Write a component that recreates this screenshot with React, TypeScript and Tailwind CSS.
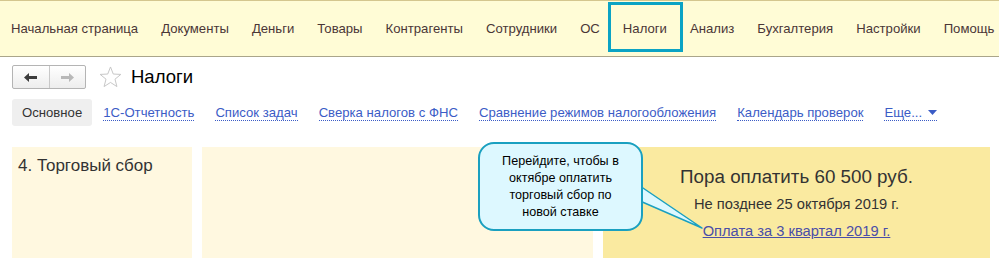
import React from 'react';

const navItems = [
  'Начальная страница',
  'Документы',
  'Деньги',
  'Товары',
  'Контрагенты',
  'Сотрудники',
  'ОС',
  'Налоги',
  'Анализ',
  'Бухгалтерия',
  'Настройки',
  'Помощь',
];

const tabLinks = [
  '1С-Отчетность',
  'Список задач',
  'Сверка налогов с ФНС',
  'Сравнение режимов налогообложения',
  'Календарь проверок',
];

const ArrowLeft = ({ color }: { color: string }) => (
  <svg width="13" height="9" viewBox="0 0 13 9">
    <path d="M0 4.5 L5 0 L5 3 L13 3 L13 6 L5 6 L5 9 Z" fill={color} />
  </svg>
);

const ArrowRight = ({ color }: { color: string }) => (
  <svg width="13" height="9" viewBox="0 0 13 9">
    <path d="M13 4.5 L8 0 L8 3 L0 3 L0 6 L8 6 L8 9 Z" fill={color} />
  </svg>
);

const Star = () => (
  <svg width="23" height="22" viewBox="0 0 24 23">
    <path
      d="M12 1 L14.9 8.4 L22.8 8.8 L16.7 13.8 L18.7 21.5 L12 17.2 L5.3 21.5 L7.3 13.8 L1.2 8.8 L9.1 8.4 Z"
      fill="none"
      stroke="#c4c4c4"
      strokeWidth="1"
      strokeLinejoin="round"
    />
  </svg>
);

export default function App() {
  return (
    <div className="relative w-[999px] h-[267px] bg-white overflow-hidden font-['Liberation_Sans',Arial,sans-serif]">
      {/* Top section bar */}
      <div className="h-[57px] bg-[#fffcd6] border-t border-t-[#d4c68e] border-b border-b-[#aaa58a] flex items-center pl-[11px] gap-[23px] whitespace-nowrap">
        {navItems.map(item => (
          <span key={item} className="text-[13.15px] text-[#4a3636]">
            {item}
          </span>
        ))}
      </div>

      {/* Highlight around active section */}
      <div className="absolute left-[608px] top-[2px] w-[75px] h-[50px] border-[3px] border-[#0ba3c4]" />

      {/* Title row */}
      <div className="flex items-center pl-[12px] pt-[8px] h-[32px]">
        <div className="flex h-[24px] w-[74px] border border-[#b4b4b4] rounded-[2px] bg-gradient-to-b from-white to-[#ededed]">
          <div className="flex-1 flex items-center justify-center border-r border-[#c8c8c8]">
            <ArrowLeft color="#3c3c3c" />
          </div>
          <div className="flex-1 flex items-center justify-center">
            <ArrowRight color="#b8b8b8" />
          </div>
        </div>
        <div className="ml-[13px] flex items-center">
          <Star />
        </div>
        <span className="ml-[9px] text-[18.5px] text-black">Налоги</span>
      </div>

      {/* Tabs row */}
      <div className="flex items-center pl-[12px] mt-[10px] gap-[21px] whitespace-nowrap">
        <div className="h-[27px] px-[10px] flex items-center bg-[#efefef] rounded-[3px] text-[13.15px] text-[#333] mr-[-10px]">
          Основное
        </div>
        {tabLinks.map(link => (
          <span
            key={link}
            className="text-[13.15px] text-[#3b5cc6] border-b border-dotted border-[#3b5cc6] leading-[15px]"
          >
            {link}
          </span>
        ))}
        <span className="flex items-end gap-[6px] border-b border-dotted border-[#3b5cc6] leading-[15px]">
          <span className="text-[13.15px] text-[#3b5cc6]">Еще...</span>
          <svg width="9" height="5" viewBox="0 0 9 5" className="mb-[5px]">
            <path d="M0 0 L9 0 L4.5 5 Z" fill="#3b5cc6" />
          </svg>
        </span>
      </div>

      {/* Panels */}
      <div className="flex pl-[12px] mt-[21px] gap-[10px] h-[111px]">
        <div className="w-[180px] bg-[#fff8e0] pl-[6px] pt-[6px]">
          <span className="text-[17px] text-[#333]">4. Торговый сбор</span>
        </div>
        <div className="w-[391px] bg-[#fff8e0]" />
        <div className="w-[387px] bg-[#faeaa0] flex flex-col items-center pt-[19px]">
          <span className="text-[18.8px] text-[#333] leading-[22px]">Пора оплатить 60 500 руб.</span>
          <span className="mt-[8px] text-[14.7px] text-[#333] leading-[17px]">Не позднее 25 октября 2019 г.</span>
          <span className="mt-[10px] text-[14.7px] text-[#4a4ea8] underline leading-[17px]">
            Оплата за 3 квартал 2019 г.
          </span>
        </div>
      </div>

      {/* Callout */}
      <svg className="absolute left-0 top-0" width="999" height="267">
        <path d="M640 186 L702 228 L640 201 Z" fill="#ddf8ff" stroke="#1aa0c0" strokeWidth="1.5" strokeLinejoin="round" />
      </svg>
      <div className="absolute left-[478px] top-[142px] w-[165px] h-[89px] rounded-[16px] border-2 border-[#1aa0c0] bg-[#ddf8ff] flex items-center justify-center text-center">
        <span className="text-[12.6px] leading-[17px] text-black">
          Перейдите, чтобы в<br />
          октябре оплатить<br />
          торговый сбор по<br />
          новой ставке
        </span>
      </div>
    </div>
  );
}
